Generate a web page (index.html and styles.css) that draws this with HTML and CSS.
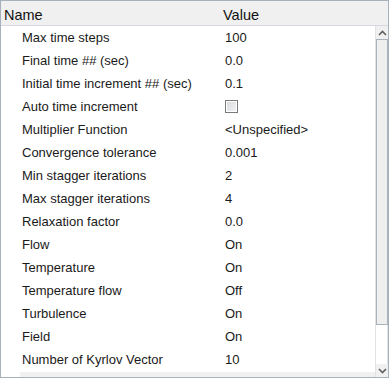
FILE: index.html
```html
<!DOCTYPE html>
<html lang="en">
<head>
  <meta charset="UTF-8">
  <title>Properties</title>
  <link rel="stylesheet" href="styles.css">
</head>
<body>
  <div class="panel">
    <!-- Column headers -->
    <div class="header">
      <div class="head-cell">Name</div>
      <div class="head-cell head-value">Value</div>
    </div>

    <div class="body">
      <div class="rows">
        <div class="row"><span class="name">Max time steps</span><span class="value">100</span></div>
        <div class="row"><span class="name">Final time ## (sec)</span><span class="value">0.0</span></div>
        <div class="row"><span class="name">Initial time increment ## (sec)</span><span class="value">0.1</span></div>
        <div class="row"><span class="name">Auto time increment</span><span class="value"><span class="checkbox"></span></span></div>
        <div class="row"><span class="name">Multiplier Function</span><span class="value">&lt;Unspecified&gt;</span></div>
        <div class="row"><span class="name">Convergence tolerance</span><span class="value">0.001</span></div>
        <div class="row"><span class="name">Min stagger iterations</span><span class="value">2</span></div>
        <div class="row"><span class="name">Max stagger iterations</span><span class="value">4</span></div>
        <div class="row"><span class="name">Relaxation factor</span><span class="value">0.0</span></div>
        <div class="row"><span class="name">Flow</span><span class="value">On</span></div>
        <div class="row"><span class="name">Temperature</span><span class="value">On</span></div>
        <div class="row"><span class="name">Temperature flow</span><span class="value">Off</span></div>
        <div class="row"><span class="name">Turbulence</span><span class="value">On</span></div>
        <div class="row"><span class="name">Field</span><span class="value">On</span></div>
        <div class="row"><span class="name">Number of Kyrlov Vector</span><span class="value">10</span></div>
        <div class="row-partial"></div>
      </div>

      <!-- Vertical scrollbar -->
      <div class="scrollbar">
        <div class="arrow">
          <svg width="9" height="6" viewBox="0 0 9 6"><path d="M1 5 L4.5 1.5 L8 5" fill="none" stroke="#606060" stroke-width="1.6"/></svg>
        </div>
        <div class="thumb"></div>
        <div class="track"></div>
        <div class="arrow">
          <svg width="9" height="6" viewBox="0 0 9 6"><path d="M1 1 L4.5 4.5 L8 1" fill="none" stroke="#606060" stroke-width="1.6"/></svg>
        </div>
      </div>
    </div>
  </div>
</body>
</html>
```

FILE: styles.css
```css
body {
  margin: 0;
  font-family: "Liberation Sans", Arial, sans-serif;
  background-color: #fff;
}

.panel {
  width: 389px;
  height: 378px;
  box-sizing: border-box;
  border: 1px solid #a7b1bb;
  display: flex;
  flex-direction: column;
  overflow: hidden;
}

.header {
  display: grid;
  grid-template-columns: 218px 1fr;
  height: 24px;
  background-color: #f0f0f0;
  border-bottom: 1px solid #d5dae0;
}

.head-cell {
  padding-left: 3px;
  font-size: 14.5px;
  line-height: 29px;
  color: #111;
}

.head-value {
  padding-left: 4px;
}

.body {
  flex: 1;
  display: flex;
  min-height: 0;
}

.rows {
  flex: 1;
  display: flex;
  flex-direction: column;
}

.row {
  display: grid;
  grid-template-columns: 218px 1fr;
  height: 23px;
  align-items: center;
  font-size: 13px;
  color: #1a1a1a;
}

.name {
  padding-left: 21px;
}

.value {
  padding-left: 6px;
  display: flex;
  align-items: center;
}

.checkbox {
  width: 11px;
  height: 11px;
  border: 1px solid #7a7a7a;
  background: linear-gradient(135deg, #d6d9de, #f4f4f4);
  box-shadow: inset 0 0 0 1px #fff;
}

.row-partial {
  height: 5px;
  margin-left: 19px;
  margin-top: 1px;
  background-color: #f0f0f0;
}

.scrollbar {
  width: 12px;
  display: flex;
  flex-direction: column;
  border-left: 1px solid #e3e3e3;
  background-color: #fff;
}

.arrow {
  height: 13px;
  display: flex;
  align-items: center;
  justify-content: center;
  background-color: #f0f0f0;
}

.thumb {
  height: 286px;
  box-sizing: border-box;
  border: 1px solid #aab2bb;
  background-color: #efefef;
}

.track {
  flex: 1;
  border-right: 1px solid #e3e3e3;
}
```
